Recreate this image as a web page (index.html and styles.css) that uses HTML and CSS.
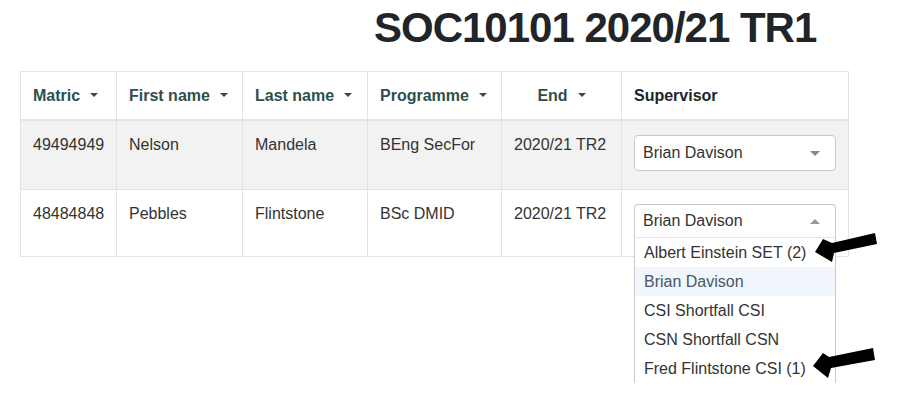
FILE: index.html
```html
<!DOCTYPE html>
<html lang="en">
<head>
<meta charset="utf-8">
<title>SOC10101 2020/21 TR1</title>
<link rel="stylesheet" href="styles.css">
</head>
<body>
<h1 class="title">SOC10101 2020/21 TR1</h1>
<table class="grid">
  <colgroup>
    <col class="w-matric"><col class="w-first"><col class="w-last"><col class="w-prog"><col class="w-end"><col class="w-sup">
  </colgroup>
  <thead>
    <tr>
      <th><span class="sort">Matric</span></th>
      <th><span class="sort">First name</span></th>
      <th><span class="sort">Last name</span></th>
      <th><span class="sort">Programme</span></th>
      <th class="center"><span class="sort">End</span></th>
      <th class="plain">Supervisor</th>
    </tr>
  </thead>
  <tbody>
    <tr class="striped">
      <td>49494949</td>
      <td>Nelson</td>
      <td>Mandela</td>
      <td>BEng SecFor</td>
      <td>2020/21 TR2</td>
      <td class="sup">
        <div class="select">
          <span class="value">Brian Davison</span><i class="caret"></i>
        </div>
      </td>
    </tr>
    <tr>
      <td>48484848</td>
      <td>Pebbles</td>
      <td>Flintstone</td>
      <td>BSc DMID</td>
      <td>2020/21 TR2</td>
      <td class="sup">
        <div class="select open">
          <span class="value">Brian Davison</span><i class="caret up"></i>
          <ul class="options">
            <li>Albert Einstein SET (2)</li>
            <li class="active">Brian Davison</li>
            <li>CSI Shortfall CSI</li>
            <li>CSN Shortfall CSN</li>
            <li>Fred Flintstone CSI (1)</li>
          </ul>
        </div>
      </td>
    </tr>
  </tbody>
</table>
<svg class="annotations" width="912" height="417" viewBox="0 0 912 417" aria-hidden="true">
  <polygon points="815,252 823,239 832,243 875,233 877,244 834,253 832,262" fill="#000"/>
  <polygon points="813,366 823,353 829,357 873,348 875,360 831,368 828,378" fill="#000"/>
</svg>
</body>
</html>
```
FILE: styles.css
```css
html, body {
  margin: 0;
  padding: 0;
  background: #fff;
}
body {
  position: relative;
  width: 912px;
  height: 417px;
  overflow: hidden;
  font-family: "Liberation Sans", Arial, Helvetica, sans-serif;
  color: #333;
}
.title {
  margin: 2px 0 0 0;
  padding-left: 374px;
  font-size: 42px;
  line-height: 52px;
  font-weight: 700;
  letter-spacing: -1px;
  color: #212529;
}
.grid {
  margin: 17px 0 0 20px;
  border-collapse: collapse;
  table-layout: fixed;
  width: 828px;
  font-size: 16px;
  line-height: 24px;
}
.w-matric { width: 96px; }
.w-first { width: 126px; }
.w-last { width: 125px; }
.w-prog { width: 134px; }
.w-end { width: 120px; }
.w-sup { width: 227px; }
.grid th, .grid td {
  border: 1px solid #e1e4e7;
  padding: 12px 12px;
  text-align: left;
  vertical-align: top;
  white-space: nowrap;
}
.grid th {
  font-weight: 700;
  color: #2f4f4a;
  border-bottom: 2px solid #e1e4e7;
  padding-bottom: 11px;
}
.grid th.center { text-align: center; }
.grid th.plain { color: #212529; }
.sort::after {
  content: "";
  display: inline-block;
  margin-left: 10px;
  vertical-align: middle;
  position: relative;
  top: -2px;
  border-left: 4px solid transparent;
  border-right: 4px solid transparent;
  border-top: 4px solid #2f4f4a;
}
.grid td { color: #333; }
.striped td { background: #f2f2f2; }
.grid td.sup { padding-bottom: 12px; }
.select {
  position: relative;
  display: flex;
  align-items: center;
  justify-content: space-between;
  box-sizing: border-box;
  height: 36px;
  margin: 2px 0 6px 0;
  padding: 0 15px 0 8px;
  background: #fff;
  border: 1px solid #c9c9c9;
  border-radius: 4px;
  color: #333;
}
.caret {
  display: block;
  width: 0;
  height: 0;
  border-left: 5px solid transparent;
  border-right: 5px solid transparent;
  border-top: 5px solid #888;
}
.caret.up {
  border-top: none;
  border-bottom: 5px solid #999;
}
.select.open {
  height: 34px;
  border-bottom: 1px solid #e6e6e6;
  border-radius: 4px 4px 0 0;
}
.options {
  position: absolute;
  left: -1px;
  right: -1px;
  top: 33px;
  z-index: 2;
  margin: 0;
  padding: 0;
  list-style: none;
  background: #fff;
  border-left: 1px solid #c9c9c9;
  border-right: 1px solid #c9c9c9;
  height: 145px;
  overflow: hidden;
}
.options li {
  height: 29px;
  line-height: 29px;
  padding-left: 9px;
  color: #333;
}
.options li.active {
  background: #f0f6fb;
  color: #4a5867;
}
.annotations {
  position: absolute;
  left: 0;
  top: 0;
  z-index: 5;
  pointer-events: none;
}
```
